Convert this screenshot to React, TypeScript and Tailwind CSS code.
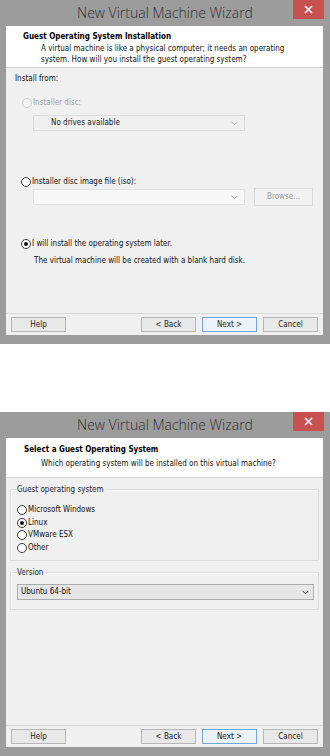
import React from "react";

const bodyFont = "font-['DejaVu_Sans_Condensed','DejaVu_Sans',sans-serif]";

function Radio({ checked = false, disabled = false }: { checked?: boolean; disabled?: boolean }) {
  return (
    <span
      className={
        disabled
          ? "flex w-[10px] h-[10px] shrink-0 items-center justify-center rounded-full border border-[#d0d0d0] bg-[#f4f4f4]"
          : "flex w-[10px] h-[10px] shrink-0 items-center justify-center rounded-full border border-[#3a3a3a] bg-white"
      }
    >
      {checked && <span className="block w-[4px] h-[4px] rounded-full bg-[#111]" />}
    </span>
  );
}

function Chevron({ color = "#7a7a7a" }: { color?: string }) {
  return (
    <svg width="7" height="5" viewBox="0 0 7 5">
      <path d="M0.5 0.8 L3.5 3.8 L6.5 0.8" fill="none" stroke={color} strokeWidth="1" />
    </svg>
  );
}

function Btn({ label, primary = false, className = "" }: { label: string; primary?: boolean; className?: string }) {
  return (
    <div
      className={
        (primary
          ? "border-[#6fa6db] bg-[#ecf2f9] "
          : "border-[#b5b5b5] bg-[#e8e8e8] ") +
        "flex h-[15px] w-[55px] items-center justify-center border text-[8px] text-[#222] " +
        className
      }
    >
      {label}
    </div>
  );
}

function Window({ children }: { children: React.ReactNode }) {
  return (
    <div className={"flex h-[344px] w-[330px] flex-col bg-[#9c9c9c] " + bodyFont}>
      <div className="relative flex h-[26px] shrink-0 items-center justify-center">
        <span className="font-['Open_Sans',sans-serif] text-[14px] font-light leading-none text-[#303030]">
          New Virtual Machine Wizard
        </span>
        <div className="absolute right-[6px] top-0 flex h-[19px] w-[31px] items-center justify-center bg-[#c75050]">
          <svg width="9" height="9" viewBox="0 0 9 9">
            <path d="M1 1 L8 8 M8 1 L1 8" stroke="#fff" strokeWidth="1.6" />
          </svg>
        </div>
      </div>
      <div className="flex flex-1 flex-col pl-[6px] pb-[9px] pr-[7px]">
        <div className="flex flex-1 flex-col bg-[#f0f0f0] text-[8px] text-[#111]">{children}</div>
      </div>
    </div>
  );
}

function Footer() {
  return (
    <div className="flex h-[22px] shrink-0 items-center border-t border-[#d8d8d8] pl-[5px] pr-[5px]">
      <Btn label="Help" />
      <div className="flex-1" />
      <Btn label="< Back" />
      <Btn label="Next >" primary className="ml-[6px]" />
      <Btn label="Cancel" className="ml-[6px]" />
    </div>
  );
}

function Wizard1() {
  return (
    <Window>
      <div className="h-[42px] shrink-0 border-b border-[#d5d5d5] bg-white pt-[5px]">
        <div className="pl-[17px] font-bold leading-[11px] text-black">Guest Operating System Installation</div>
        <div className="mt-[1px] pl-[35px] leading-[11px]">
          A virtual machine is like a physical computer; it needs an operating
          <br />
          system. How will you install the guest operating system?
        </div>
      </div>
      <div className="mt-[6px] pl-[9px] leading-[10px]">Install from:</div>
      <div className="mt-[14px] flex items-center gap-[1px] pl-[16px] leading-[10px] text-[#a3a3a3]">
        <Radio disabled />
        <span>Installer disc:</span>
      </div>
      <div className="ml-[27px] mt-[7px] flex h-[16px] w-[212px] items-center border border-[#dcdcdc] bg-[#f0f0f0] pl-[17px] pr-[6px]">
        <span className="flex-1 text-[#222]">No drives available</span>
        <Chevron color="#b0b0b0" />
      </div>
      <div className="mt-[46px] flex items-center gap-[1px] pl-[15px] leading-[10px]">
        <Radio />
        <span>Installer disc image file (iso):</span>
      </div>
      <div className="mt-[1px] flex h-[18px] items-center pl-[27px]">
        <div className="flex h-[16px] w-[212px] items-center justify-end border border-[#e2e2e2] bg-[#f7f7f7] pr-[6px]">
          <Chevron color="#9a9a9a" />
        </div>
        <div className="ml-[9px] flex h-[18px] w-[59px] items-center justify-center border border-[#d9d9d9] bg-[#f2f2f2] text-[#9a9a9a]">
          Browse...
        </div>
      </div>
      <div className="mt-[33px] flex items-center gap-[1px] pl-[15px] leading-[10px]">
        <Radio checked />
        <span>I will install the operating system later.</span>
      </div>
      <div className="mt-[7px] pl-[28px] leading-[10px]">
        The virtual machine will be created with a blank hard disk.
      </div>
      <div className="flex-1" />
      <Footer />
    </Window>
  );
}

function Wizard2() {
  return (
    <Window>
      <div className="h-[40px] shrink-0 border-b border-[#d5d5d5] bg-white pt-[6px]">
        <div className="pl-[18px] font-bold leading-[11px] text-black">Select a Guest Operating System</div>
        <div className="mt-[3px] pl-[35px] leading-[11px]">
          Which operating system will be installed on this virtual machine?
        </div>
      </div>
      <div className="mx-[4px] mt-[11px] flex h-[72px] flex-col border border-[#dcdcdc] pl-[6px] shadow-[inset_1px_1px_0_#fff]">
        <div className="-mt-[5px] w-fit bg-[#f0f0f0] pr-[2px] leading-[10px] text-[#222]">Guest operating system</div>
        <div className="mt-[10px] flex flex-col gap-[2.5px] leading-[10px]">
          <div className="flex items-center gap-[1px]"><Radio /><span>Microsoft Windows</span></div>
          <div className="flex items-center gap-[1px]"><Radio checked /><span>Linux</span></div>
          <div className="flex items-center gap-[1px]"><Radio /><span>VMware ESX</span></div>
          <div className="flex items-center gap-[1px]"><Radio /><span>Other</span></div>
        </div>
      </div>
      <div className="mx-[4px] mt-[11px] flex h-[38px] flex-col border border-[#dcdcdc] pl-[6px] pr-[4px] shadow-[inset_1px_1px_0_#fff]">
        <div className="-mt-[5px] w-fit bg-[#f0f0f0] pr-[2px] leading-[10px] text-[#222]">Version</div>
        <div className="mt-[6px] flex h-[16px] items-center border border-[#acacac] bg-[#e6e6e6] pl-[3px] pr-[4px]">
          <span className="flex-1">Ubuntu 64-bit</span>
          <Chevron color="#333" />
        </div>
      </div>
      <div className="flex-1" />
      <Footer />
    </Window>
  );
}

export default function App() {
  return (
    <div className="flex h-[756px] w-[330px] flex-col bg-white">
      <Wizard1 />
      <div className="h-[68px] shrink-0" />
      <Wizard2 />
    </div>
  );
}
